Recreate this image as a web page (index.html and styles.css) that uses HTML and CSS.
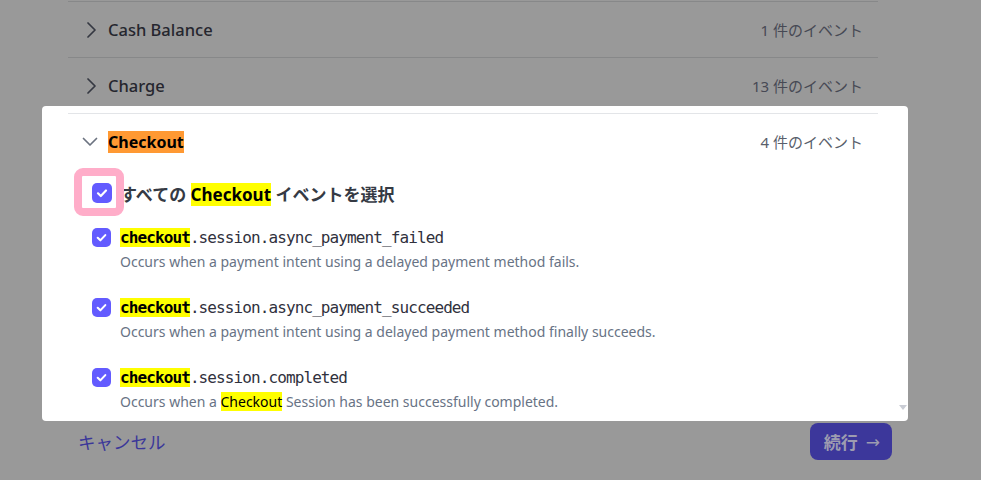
FILE: index.html
```html
<!DOCTYPE html>
<html lang="ja">
<head>
<meta charset="utf-8">
<title>Events</title>
<link rel="stylesheet" href="styles.css">
</head>
<body>
<div class="page">
  <div class="list">
    <div class="row dim">
      <span class="chev"><svg viewBox="0 0 16 16" width="16" height="16"><path d="M6 1 L13 8 L6 15" fill="none" stroke="currentColor" stroke-width="1.7" stroke-linecap="round" stroke-linejoin="round"/></svg></span>
      <span class="name">Cash Balance</span>
      <span class="count">1 件のイベント</span>
    </div>
    <div class="row dim">
      <span class="chev"><svg viewBox="0 0 16 16" width="16" height="16"><path d="M6 1 L13 8 L6 15" fill="none" stroke="currentColor" stroke-width="1.7" stroke-linecap="round" stroke-linejoin="round"/></svg></span>
      <span class="name">Charge</span>
      <span class="count">13 件のイベント</span>
    </div>
    <div class="spot">
      <div class="row open">
        <span class="chev"><svg viewBox="0 0 16 16" width="16" height="16"><path d="M1.5 4.5 L8 11 L14.5 4.5" fill="none" stroke="currentColor" stroke-width="1.7" stroke-linecap="round" stroke-linejoin="round"/></svg></span>
        <span class="name strong"><mark class="orange">Checkout</mark></span>
        <span class="count">4 件のイベント</span>
      </div>
      <div class="all">
        <span class="cb big">
          <span class="ring"></span>
          <svg viewBox="0 0 20 20" width="20" height="20"><path d="M6 10.3 L8.8 13 L14 7.5" fill="none" stroke="#fff" stroke-width="2.2" stroke-linecap="round" stroke-linejoin="round"/></svg>
        </span>
        <span class="all-text">すべての <mark class="yellow">Checkout</mark> イベントを選択</span>
      </div>
      <div class="item">
        <span class="cb"><svg viewBox="0 0 20 20" width="19" height="19"><path d="M6 10.3 L8.8 13 L14 7.5" fill="none" stroke="#fff" stroke-width="2.2" stroke-linecap="round" stroke-linejoin="round"/></svg></span>
        <div class="text">
          <div class="code"><mark class="yellow b">checkout</mark>.session.async_payment_failed</div>
          <div class="desc">Occurs when a payment intent using a delayed payment method fails.</div>
        </div>
      </div>
      <div class="item">
        <span class="cb"><svg viewBox="0 0 20 20" width="19" height="19"><path d="M6 10.3 L8.8 13 L14 7.5" fill="none" stroke="#fff" stroke-width="2.2" stroke-linecap="round" stroke-linejoin="round"/></svg></span>
        <div class="text">
          <div class="code"><mark class="yellow b">checkout</mark>.session.async_payment_succeeded</div>
          <div class="desc">Occurs when a payment intent using a delayed payment method finally succeeds.</div>
        </div>
      </div>
      <div class="item">
        <span class="cb"><svg viewBox="0 0 20 20" width="19" height="19"><path d="M6 10.3 L8.8 13 L14 7.5" fill="none" stroke="#fff" stroke-width="2.2" stroke-linecap="round" stroke-linejoin="round"/></svg></span>
        <div class="text">
          <div class="code"><mark class="yellow b">checkout</mark>.session.completed</div>
          <div class="desc">Occurs when a <mark class="yellow">Checkout</mark> Session has been successfully completed.</div>
        </div>
      </div>
      <span class="scroll-arrow"></span>
    </div>
  </div>
  <div class="footer">
    <span class="cancel">キャンセル</span>
    <span class="btn">続行 <span class="arrow">→</span></span>
  </div>
</div>
</body>
</html>
```

FILE: styles.css
```css
html, body {
  margin: 0;
  padding: 0;
}
body {
  background: #999999;
  font-family: "Noto Sans", "Noto Sans CJK JP", sans-serif;
  width: 981px;
  height: 480px;
  overflow: hidden;
}
.page {
  padding-top: 1px;
}
.list {
  margin-left: 68px;
  width: 810px;
}
.row {
  display: flex;
  align-items: center;
  height: 55px;
  border-top: 1px solid #878889;
  padding-right: 15px;
}
.chev {
  width: 16px;
  height: 16px;
  margin-left: 14px;
  margin-right: 10px;
  display: flex;
}
.row.dim .chev { color: #353842; }
.name {
  font-size: 16.5px;
  font-weight: 500;
  color: #25262e;
}
.count {
  margin-left: auto;
  font-size: 15px;
  color: #474954;
}
.spot {
  position: relative;
  background: #ffffff;
  border-radius: 4px;
  margin: -7px -30px 0 -26px;
  padding: 7px 30px 7px 26px;
}
.row.open {
  border-top-color: #e3e5e8;
}
.row.open .chev { color: #6c7380; }
.row.open .count { color: #5a5f6b; }
.name.strong {
  font-size: 16px;
  font-weight: 700;
  color: #000;
}
mark {
  color: inherit;
  padding: 0;
}
mark.orange { background: #ff9933; color: #000; }
mark.yellow { background: #ffff00; color: #000; }
mark.b { font-weight: 700; }

.all {
  display: flex;
  align-items: center;
  height: 48px;
  padding-left: 24px;
}
.cb {
  position: relative;
  flex: none;
  width: 19px;
  height: 19px;
  border-radius: 5px;
  background: #635bff;
  display: flex;
}
.cb.big {
  width: 20px;
  height: 20px;
}
.ring {
  position: absolute;
  left: -18px;
  top: -15px;
  width: 34px;
  height: 32px;
  border: 8px solid #ffadc9;
  border-radius: 9px;
}
.all-text {
  margin-left: 8px;
  font-size: 17px;
  font-weight: 700;
  color: #353a44;
}
.item {
  display: flex;
  align-items: flex-start;
  padding-left: 24px;
  margin-top: 9px;
}
.item + .item {
  margin-top: 22px;
}
.item .cb {
  margin-top: 2px;
}
.text {
  margin-left: 9px;
}
.code {
  font-family: "DejaVu Sans Mono", monospace;
  font-size: 16px;
  letter-spacing: -0.9px;
  line-height: 24px;
  color: #30313d;
}
.desc {
  font-size: 14px;
  line-height: 24px;
  color: #687385;
}
.scroll-arrow {
  position: absolute;
  right: 1px;
  bottom: 11px;
  width: 0;
  height: 0;
  border-left: 4px solid transparent;
  border-right: 4px solid transparent;
  border-top: 5px solid #c9ccd4;
}
.footer {
  display: flex;
  align-items: center;
  justify-content: space-between;
  margin-top: 2px;
  margin-left: 78px;
  width: 814px;
}
.cancel {
  font-size: 17.5px;
  color: #3b3799;
}
.btn {
  height: 37px;
  box-sizing: border-box;
  padding: 0 12px 0 14px;
  display: flex;
  align-items: center;
  gap: 8px;
  background: #3c379b;
  border-radius: 8px;
  font-size: 17px;
  font-weight: 700;
  color: #9d9cb0;
}
.arrow {
  font-weight: 400;
  font-family: "DejaVu Sans", sans-serif;
}
```
